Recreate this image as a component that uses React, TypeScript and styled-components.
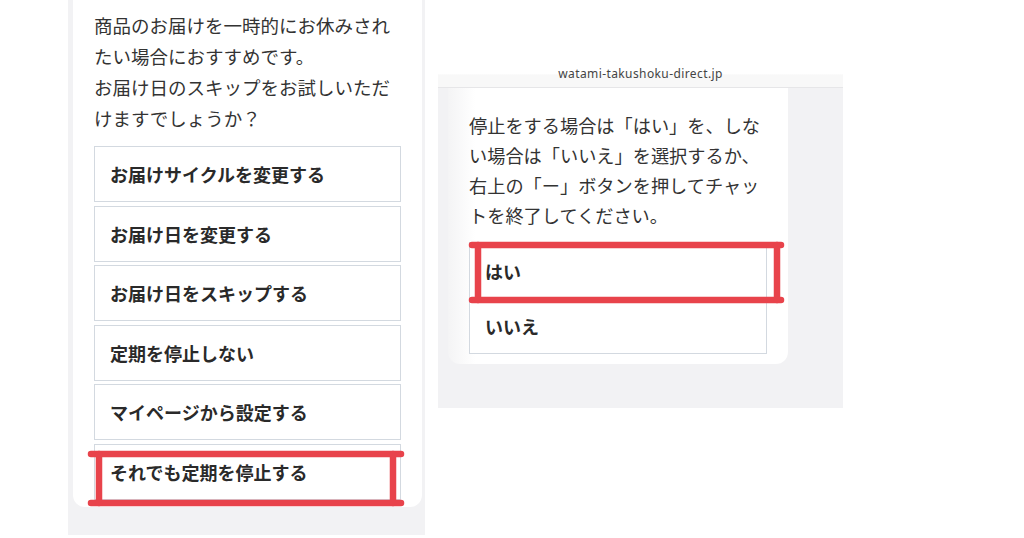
import React from 'react'
import styled, { createGlobalStyle } from 'styled-components'

const GlobalStyle = createGlobalStyle`
  html, body {
    margin: 0;
    padding: 0;
    background: #ffffff;
  }
  body {
    width: 1024px;
    height: 538px;
    overflow: hidden;
    font-family: 'Noto Sans CJK JP', 'Noto Sans', sans-serif;
    color: #333333;
  }
`

const Stage = styled.div`
  display: flex;
  align-items: flex-start;
  gap: 13px;
  padding-left: 68px;
  height: 538px;
`

const LeftPanel = styled.div`
  width: 357px;
  height: 535px;
  box-sizing: border-box;
  background: #f2f2f4;
  padding: 0 3px 0 5px;
`

const RightPanel = styled.div`
  width: 405px;
  margin-top: 64px;
  display: flex;
  flex-direction: column;
`

const Header = styled.div`
  height: 24px;
  box-sizing: border-box;
  background: linear-gradient(180deg, #ffffff 0%, #ffffff 45%, #f8f8f8 46%, #f8f8f8 100%);
  border-bottom: 1.5px solid #e6e6e8;
  display: flex;
  justify-content: center;
  align-items: flex-start;
  padding-top: 3px;
`

const Url = styled.span`
  font-family: 'Noto Sans', sans-serif;
  font-size: 12px;
  line-height: 14px;
  color: #444;
  letter-spacing: 0.4px;
`

const ChatArea = styled.div`
  background: #f2f2f4;
  padding: 0 55px 44px 10px;
`

const Card = styled.div<{ $padTop: number; $padBottom: number; $shade?: boolean }>`
  background: ${(p) =>
    p.$shade ? 'linear-gradient(90deg, #f4f4f5 0%, #ffffff 8%, #ffffff 100%)' : '#ffffff'};
  border-radius: 0 0 12px 12px;
  padding: ${(p) => p.$padTop}px 21px ${(p) => p.$padBottom}px 21px;
`

const Message = styled.p<{ $lineHeight: number; $size: number }>`
  margin: 0;
  font-size: ${(p) => p.$size}px;
  line-height: ${(p) => p.$lineHeight}px;
  color: #333;
`

const ChoiceList = styled.div<{ $gap: number; $top: number }>`
  display: flex;
  flex-direction: column;
  gap: ${(p) => p.$gap}px;
  margin-top: ${(p) => p.$top}px;
`

const Choice = styled.div<{ $height: number; $joined?: boolean }>`
  position: relative;
  height: ${(p) => p.$height}px;
  box-sizing: border-box;
  border: 1.5px solid #d3d9e0;
  ${(p) => (p.$joined ? 'margin-top: -1.5px;' : '')}
  background: #ffffff;
  display: flex;
  align-items: center;
  padding-left: 15px;
  font-size: 18px;
  font-weight: 700;
  color: #2a2a2a;
`

const Mark = styled.svg`
  position: absolute;
  left: -8px;
  top: -8px;
  z-index: 2;
  overflow: visible;
  pointer-events: none;
`

type MarkBox = { x1: number; x2: number; y1: number; y2: number; vl: number; vr: number }

const RedMark: React.FC<{ box: MarkBox }> = ({ box }) => {
  const o = 8
  const { x1, x2, y1, y2, vl, vr } = box
  return (
    <Mark width={x2 + 16} height={y2 + 16}>
      <g stroke="#e8434b" strokeWidth={6.5} strokeLinecap="round" fill="none">
        <line x1={x1 + o} y1={y1 + o} x2={x2 + o} y2={y1 + o} />
        <line x1={x1 + o} y1={y2 + o} x2={x2 + o} y2={y2 + o} />
        <line x1={vl + o} y1={y1 + o} x2={vl + o} y2={y2 + o} />
        <line x1={vr + o} y1={y1 + o} x2={vr + o} y2={y2 + o} />
      </g>
    </Mark>
  )
}

const leftChoices = [
  'お届けサイクルを変更する',
  'お届け日を変更する',
  'お届け日をスキップする',
  '定期を停止しない',
  'マイページから設定する',
  'それでも定期を停止する'
]

export default function App() {
  return (
    <>
      <GlobalStyle />
      <Stage>
        <LeftPanel>
          <Card $padTop={10} $padBottom={7}>
            <Message $size={18.5} $lineHeight={31}>
              商品のお届けを一時的にお休みされたい場合におすすめです。
              <br />
              お届け日のスキップをお試しいただけますでしょうか？
            </Message>
            <ChoiceList $gap={3.5} $top={12}>
              {leftChoices.map((label, i) => (
                <Choice key={label} $height={56}>
                  {label}
                  {i === leftChoices.length - 1 && (
                    <RedMark box={{ x1: -4, x2: 306, y1: 9, y2: 58, vl: 4, vr: 298 }} />
                  )}
                </Choice>
              ))}
            </ChoiceList>
          </Card>
        </LeftPanel>

        <RightPanel>
          <Header>
            <Url>watami-takushoku-direct.jp</Url>
          </Header>
          <ChatArea>
            <Card $padTop={22} $padBottom={10} $shade>
              <Message $size={18.2} $lineHeight={30}>
                停止をする場合は「はい」を、しない場合は「いいえ」を選択するか、右上の「ー」ボタンを押してチャットを終了してください。
              </Message>
              <ChoiceList $gap={0} $top={12}>
                <Choice $height={58}>
                  はい
                  <RedMark box={{ x1: 2, x2: 311, y1: 2, y2: 57, vl: 8, vr: 307 }} />
                </Choice>
                <Choice $height={55} $joined>
                  いいえ
                </Choice>
              </ChoiceList>
            </Card>
          </ChatArea>
        </RightPanel>
      </Stage>
    </>
  )
}
